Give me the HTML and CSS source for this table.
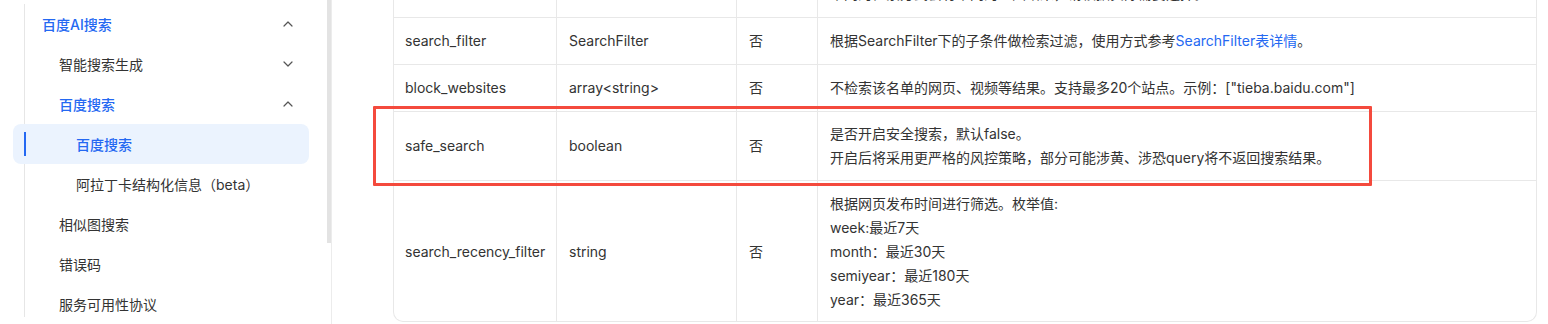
FILE: index.html
```html
<!DOCTYPE html>
<html lang="zh-CN">
<head>
<meta charset="utf-8">
<title>百度搜索 API</title>
<link rel="stylesheet" href="styles.css">
</head>
<body>
<div class="layout">
  <aside class="sidebar">
    <div class="nav">
      <div class="tree">
        <div class="item lvl1 open">
          <span>百度AI搜索</span>
          <svg class="chev" viewBox="0 0 12 12"><path d="M2 8 L6 4 L10 8"/></svg>
        </div>
        <div class="item lvl2">
          <span>智能搜索生成</span>
          <svg class="chev" viewBox="0 0 12 12"><path d="M2 4 L6 8 L10 4"/></svg>
        </div>
        <div class="item lvl2 open">
          <span>百度搜索</span>
          <svg class="chev" viewBox="0 0 12 12"><path d="M2 8 L6 4 L10 8"/></svg>
        </div>
        <div class="item lvl3 active"><span>百度搜索</span></div>
        <div class="item lvl3"><span>阿拉丁卡结构化信息（beta）</span></div>
        <div class="item lvl2"><span>相似图搜索</span></div>
        <div class="item lvl2"><span>错误码</span></div>
        <div class="item lvl2"><span>服务可用性协议</span></div>
      </div>
    </div>
    <div class="scrollbar"><div class="thumb"></div></div>
  </aside>
  <main class="main">
    <div class="table-wrap">
      <table class="params">
        <colgroup>
          <col class="c1"><col class="c2"><col class="c3"><col class="c4">
        </colgroup>
        <tbody>
          <tr class="cut">
            <td></td><td></td><td></td>
            <td>不同的检索方式会有不同的返回结果，请根据实际需要选择。</td>
          </tr>
          <tr class="single">
            <td>search_filter</td><td>SearchFilter</td><td>否</td>
            <td>根据SearchFilter下的子条件做检索过滤，使用方式参考<a class="link" href="#">SearchFilter表详情</a>。</td>
          </tr>
          <tr class="single">
            <td>block_websites</td><td>array&lt;string&gt;</td><td>否</td>
            <td>不检索该名单的网页、视频等结果。支持最多20个站点。示例：["tieba.baidu.com"]</td>
          </tr>
          <tr>
            <td>safe_search</td><td>boolean</td><td>否</td>
            <td>是否开启安全搜索，默认false。<br>开启后将采用更严格的风控策略，部分可能涉黄、涉恐query将不返回搜索结果。</td>
          </tr>
          <tr class="last">
            <td>search_recency_filter</td><td>string</td><td>否</td>
            <td>根据网页发布时间进行筛选。枚举值:<br>week:最近7天<br>month：最近30天<br>semiyear：最近180天<br>year：最近365天</td>
          </tr>
        </tbody>
      </table>
    </div>
    <div class="highlight"></div>
  </main>
</div>
</body>
</html>
```

FILE: styles.css
```css
* { box-sizing: border-box; }
html, body {
  margin: 0;
  padding: 0;
  background: #fff;
  height: 324px;
  overflow: hidden;
}
body {
  font-family: "Inter", "Noto Sans CJK SC", sans-serif;
  font-size: 14px;
  color: #333;
}
.layout {
  display: flex;
  height: 324px;
}
.sidebar {
  width: 332px;
  flex: none;
  display: flex;
  border-right: 1px solid #ececec;
}
.nav {
  width: 327px;
  height: 317px;
  overflow: hidden;
  padding-top: 4px;
}
.tree {
  margin-left: 24px;
  width: 284px;
  border-left: 1px solid #e6e6e6;
  min-height: 330px;
}
.item {
  position: relative;
  height: 40px;
  display: flex;
  align-items: center;
  justify-content: space-between;
  padding-right: 14px;
  color: #333;
  white-space: nowrap;
}
.lvl1 { padding-left: 17px; color: #2468f2; font-weight: 500; }
.lvl2 { padding-left: 34px; }
.lvl3 { padding-left: 51px; }
.lvl2.open { color: #2468f2; font-weight: 500; }
.item.active {
  margin-left: -12px;
  padding-left: 63px;
  width: 296px;
  background: #ebf3fe;
  border-radius: 8px;
  color: #2468f2;
  font-weight: 500;
}
.item.active::before {
  content: "";
  position: absolute;
  left: 11px;
  top: 8px;
  width: 2px;
  height: 24px;
  background: #2468f2;
}
.chev {
  width: 12px;
  height: 12px;
  fill: none;
  stroke: #555;
  stroke-width: 1.2;
  stroke-linecap: round;
  stroke-linejoin: round;
}
.scrollbar {
  width: 4px;
  height: 324px;
}
.thumb {
  width: 4px;
  height: 243px;
  background: #e3e3e3;
}
.main {
  position: relative;
  flex: 1;
  padding: 0 11px 0 61px;
}
.table-wrap {
  margin-top: -28px;
}
.params {
  width: 1144px;
  border-collapse: separate;
  border-spacing: 0;
  table-layout: fixed;
  border-left: 1px solid #e8e8e8;
  border-right: 1px solid #e8e8e8;
  border-bottom: 1px solid #e8e8e8;
  border-radius: 0 0 10px 10px;
}
.c1 { width: 162px; }
.c2 { width: 180px; }
.c3 { width: 81px; }
.c4 { width: 719px; }
.params td {
  padding: 10px 12px;
  line-height: 24px;
  vertical-align: middle;
  border-bottom: 1px solid #e8e8e8;
  border-left: 1px solid #e8e8e8;
  color: #333;
}
.params td:first-child { border-left: none; padding-left: 11px; }
.params tr.last td { border-bottom: none; padding-top: 11px; padding-bottom: 9px; }
.params tr.single td { height: 47px; }
.params tr.cut td { height: 46px; vertical-align: bottom; padding-top: 8px; padding-bottom: 11px; }
.link {
  color: #2468f2;
  text-decoration: none;
}
.highlight {
  position: absolute;
  left: 41px;
  top: 106px;
  width: 999px;
  height: 80px;
  border: 3px solid #f44a3d;
  border-radius: 1px;
  pointer-events: none;
}
```
